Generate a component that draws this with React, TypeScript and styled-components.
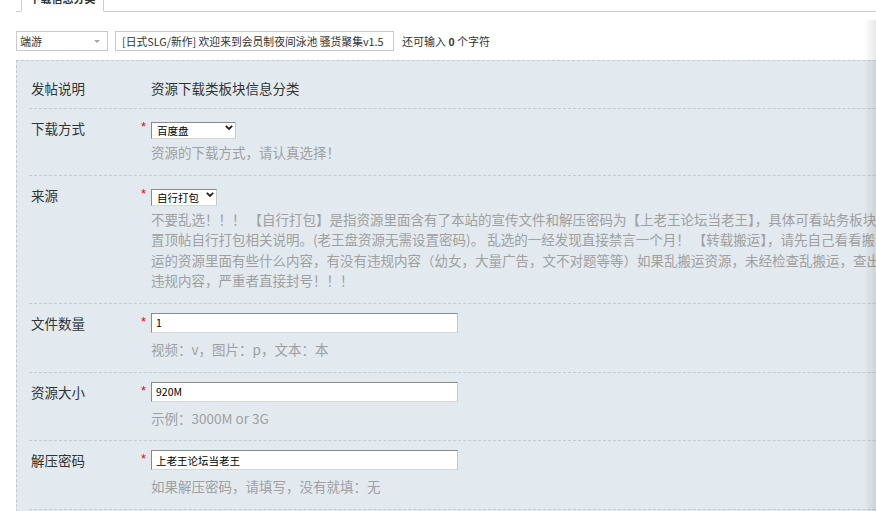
import React from 'react';
import styled, { createGlobalStyle } from 'styled-components';

const GlobalStyle = createGlobalStyle`
  html, body {
    margin: 0;
    padding: 0;
    background: #fff;
    overflow: hidden;
  }
  body {
    font-family: "Noto Sans CJK SC", "Liberation Sans", sans-serif;
    color: #333;
  }
`;

const Page = styled.div`
  margin-top: -14px;
  padding-left: 16px;
  width: 1100px;
`;

const TabBar = styled.div`
  display: flex;
  align-items: flex-end;
  height: 26px;
  box-sizing: border-box;
  border-bottom: 1px solid #cfcfcf;
  padding-left: 5px;
`;

const Tab = styled.div`
  width: 83px;
  height: 26px;
  box-sizing: border-box;
  margin-bottom: -1px;
  border: 1px solid #cfcfcf;
  border-bottom-color: #fff;
  background: #fff;
  font-size: 11px;
  font-weight: 700;
  line-height: 22px;
  text-align: center;
  color: #333;
`;

const TitleRow = styled.div`
  display: flex;
  align-items: center;
  margin-top: 19px;
  height: 20px;
`;

const TypeSelect = styled.div`
  position: relative;
  width: 92px;
  height: 20px;
  box-sizing: border-box;
  border: 1px solid #c9c9c9;
  background: #fff;
  font-size: 11px;
  line-height: 18px;
  padding-left: 3px;
  color: #333;
`;

const Caret = styled.svg`
  position: absolute;
  right: 7px;
  top: 8px;
`;

const TitleInput = styled.input`
  width: 279px;
  height: 20px;
  box-sizing: border-box;
  margin-left: 7px;
  border: 1px solid #c9c9c9;
  padding: 0 0 0 6px;
  font-family: "Noto Sans CJK SC", sans-serif;
  font-size: 10.8px;
  color: #333;
  outline: none;
`;

const Counter = styled.span`
  margin-left: 8px;
  font-size: 11px;
  color: #333;

  b {
    font-family: "Liberation Sans", sans-serif;
    font-weight: 700;
  }
`;

const Panel = styled.div`
  margin-top: 9px;
  border: 1px dashed #c3cbd2;
  background: #e2eaef;
  padding-left: 12px;
  height: 600px;
`;

const Row = styled.div<{ $first?: boolean }>`
  display: flex;
  align-items: flex-start;
  padding: ${(p) => (p.$first ? '17px 0 9px' : '9px 0 12px')};
  border-bottom: 1px dashed #c3cbd2;
`;

const Label = styled.div`
  width: 111px;
  box-sizing: border-box;
  padding-left: 2px;
  font-size: 13.5px;
  line-height: 21px;
  color: #333;
  flex-shrink: 0;
`;

const Star = styled.span`
  width: 11px;
  flex-shrink: 0;
  box-sizing: border-box;
  padding-left: 1px;
  font-family: "Liberation Sans", sans-serif;
  font-size: 13px;
  line-height: 17px;
  color: #f00;
`;

const Value = styled.div<{ $offset?: boolean }>`
  display: flex;
  flex-direction: column;
  align-items: flex-start;
  margin-left: ${(p) => (p.$offset ? '11px' : '0')};
  font-size: 13.5px;
  line-height: 21px;
  color: #333;
`;

const SelectWrap = styled.div<{ $w: number }>`
  position: relative;
  width: ${(p) => p.$w}px;
  height: 17px;
  margin: 1px 0 6px;
`;

const Select = styled.select`
  appearance: none;
  width: 100%;
  height: 17px;
  box-sizing: border-box;
  margin: 0;
  border: 1px solid;
  border-color: #8a8a8a #c8c8c8 #d6d6d6 #8a8a8a;
  border-radius: 0;
  background: #fff;
  padding: 0 0 0 5px;
  font-family: "Noto Sans CJK SC", sans-serif;
  font-size: 10.5px;
  line-height: 15px;
  color: #000;
  outline: none;
`;

const Chevron = styled.svg`
  position: absolute;
  right: 3px;
  top: 6px;
  pointer-events: none;
`;

const TextField = styled.input`
  width: 307px;
  height: 20px;
  box-sizing: border-box;
  margin: 0 0 6px;
  border: 1px solid;
  border-color: #8a8a8a #c8c8c8 #d6d6d6 #8a8a8a;
  background: #fff;
  padding: 0 0 0 4px;
  font-family: "Noto Sans CJK SC", sans-serif;
  font-size: 10.5px;
  color: #000;
  outline: none;
`;

const Hint = styled.div`
  font-size: 13.5px;
  line-height: 20.6px;
  color: #a0a0a0;
  white-space: nowrap;
`;

const EdgeShadow = styled.div`
  position: fixed;
  top: 20px;
  right: 0;
  bottom: 0;
  width: 12px;
  background: linear-gradient(to right, rgba(0, 0, 0, 0), rgba(0, 0, 0, 0.09));
  pointer-events: none;
`;

function DropSelect({ width, value }: { width: number; value: string }) {
  return (
    <SelectWrap $w={width}>
      <Select defaultValue={value}>
        <option>{value}</option>
      </Select>
      <Chevron width="8" height="5" viewBox="0 0 8 5">
        <polyline points="0.8,0.8 4,4 7.2,0.8" fill="none" stroke="#222" strokeWidth="1.8" />
      </Chevron>
    </SelectWrap>
  );
}

export default function App() {
  return (
    <>
      <GlobalStyle />
      <Page>
        <TabBar>
          <Tab>下载信息分类</Tab>
        </TabBar>

        <TitleRow>
          <TypeSelect>
            端游
            <Caret width="6" height="3" viewBox="0 0 6 3">
              <polygon points="0,0 6,0 3,3" fill="#a8a8a8" />
            </Caret>
          </TypeSelect>
          <TitleInput defaultValue="[日式SLG/新作] 欢迎来到会员制夜间泳池 骚货聚集v1.5" />
          <Counter>
            还可输入 <b>0</b> 个字符
          </Counter>
        </TitleRow>

        <Panel>
          <Row $first>
            <Label>发帖说明</Label>
            <Value $offset>资源下载类板块信息分类</Value>
          </Row>

          <Row>
            <Label>下载方式</Label>
            <Star>*</Star>
            <Value>
              <DropSelect width={85} value="百度盘" />
              <Hint>资源的下载方式，请认真选择！</Hint>
            </Value>
          </Row>

          <Row>
            <Label>来源</Label>
            <Star>*</Star>
            <Value>
              <DropSelect width={66} value="自行打包" />
              <Hint>
                不要乱选！！！ 【自行打包】是指资源里面含有了本站的宣传文件和解压密码为【上老王论坛当老王】，具体可看站务板块
                <br />
                置顶帖自行打包相关说明。(老王盘资源无需设置密码)。 乱选的一经发现直接禁言一个月！ 【转载搬运】，请先自己看看搬
                <br />
                运的资源里面有些什么内容，有没有违规内容（幼女，大量广告，文不对题等等）如果乱搬运资源，未经检查乱搬运，查出
                <br />
                违规内容，严重者直接封号！！！
              </Hint>
            </Value>
          </Row>

          <Row>
            <Label>文件数量</Label>
            <Star>*</Star>
            <Value>
              <TextField defaultValue="1" />
              <Hint>视频：v，图片：p，文本：本</Hint>
            </Value>
          </Row>

          <Row>
            <Label>资源大小</Label>
            <Star>*</Star>
            <Value>
              <TextField defaultValue="920M" />
              <Hint>示例：3000M or 3G</Hint>
            </Value>
          </Row>

          <Row>
            <Label>解压密码</Label>
            <Star>*</Star>
            <Value>
              <TextField defaultValue="上老王论坛当老王" />
              <Hint>如果解压密码，请填写，没有就填：无</Hint>
            </Value>
          </Row>
        </Panel>
      </Page>
      <EdgeShadow />
    </>
  );
}
